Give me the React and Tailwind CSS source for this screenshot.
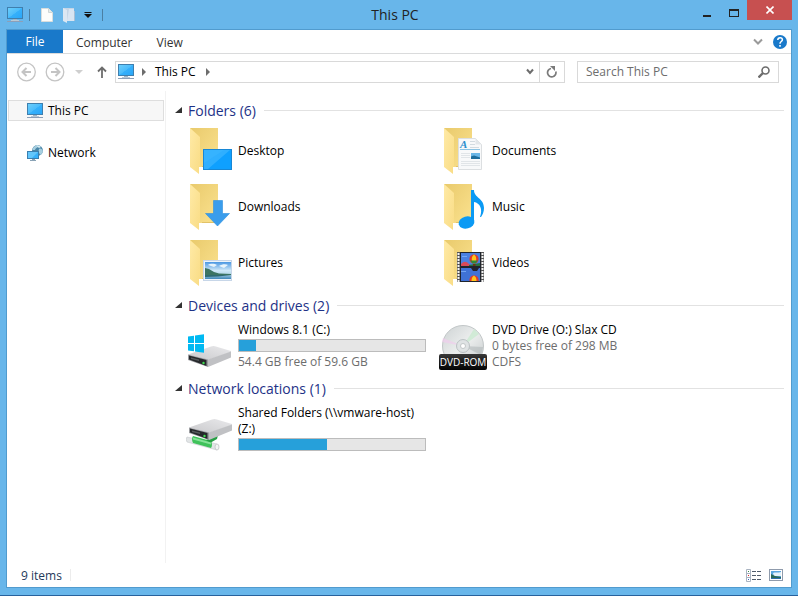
import { useState } from 'react'

const folders = [
  { name: 'Desktop', Badge: DesktopBadge },
  { name: 'Documents', Badge: DocumentBadge },
  { name: 'Downloads', Badge: DownloadBadge },
  { name: 'Music', Badge: MusicBadge },
  { name: 'Pictures', Badge: PictureBadge },
  { name: 'Videos', Badge: VideoBadge },
]

function Monitor() {
  return (
    <svg viewBox="0 0 16 16" className="w-4 h-4 shrink-0">
      <defs>
        <linearGradient id="screen" x1="0" y1="0" x2="1" y2="1">
          <stop offset="0" stopColor="#6fd0fb" />
          <stop offset=".5" stopColor="#4cbcfb" />
          <stop offset=".52" stopColor="#35b0fb" />
          <stop offset="1" stopColor="#2aa6f8" />
        </linearGradient>
      </defs>
      <rect x=".5" y=".5" width="15" height="11" fill="url(#screen)" stroke="#3f7fae" />
      <path d="M6 12h4v1H6z" fill="#9fb4c6" />
      <path d="M4 13h8v1H4z" fill="#b9c9d6" />
      <path d="M0 14.500h16" stroke="#8c9fb8" />
    </svg>
  )
}

function NetworkIcon() {
  return (
    <svg viewBox="0 0 16 16" className="w-4 h-4 shrink-0">
      <circle cx="10.500" cy="5.500" r="5.400" fill="#4a86a8" />
      <path d="M6 3c2-3 5-3 6-2-1 2-3 1-4 4H5.500zM12 4c2-1 3 0 4 2l-2 4c-2-1-3-3-2-6z" fill="#a6cfe0" />
      <path d="M9 .5c2-.5 4 .5 5 1.500l-2 1z" fill="#d6ecf3" />
      <rect x=".5" y="6.500" width="11" height="7" fill="#35b0fb" stroke="#3a7fb0" />
      <path d="M1 7h10L5 13H1z" fill="#62c6fc" />
      <path d="M5 14h3v1H5z" fill="#8aa3b6" />
      <path d="M3 15.500h6" stroke="#8aa3b6" />
    </svg>
  )
}

function Folder({ children }) {
  return (
    <svg viewBox="0 0 48 48" className="w-12 h-12 shrink-0">
      <defs>
        <linearGradient id="folderBack" x1="0" y1="0" x2="1" y2="1">
          <stop offset="0" stopColor="#e9ca6c" />
          <stop offset="1" stopColor="#fbe28f" />
        </linearGradient>
        <linearGradient id="folderFront" x1="0" y1="0" x2="1" y2="1">
          <stop offset="0" stopColor="#ffeaa6" />
          <stop offset="1" stopColor="#f9dc85" />
        </linearGradient>
      </defs>
      <path d="M4 1h28v39H13z" fill="url(#folderBack)" />
      <path d="M13 10v30h3v-1h16v1H13z" fill="#e2c268" />
      <path d="M4 1l10 9v29l-1 1v7L4 40z" fill="url(#folderFront)" />
      {children}
    </svg>
  )
}

function DesktopBadge() {
  return (
    <g>
      <rect x="17.500" y="22.500" width="28" height="20" fill="#0fa0ff" stroke="#1787d6" />
      <path d="M18 23h26L22 42h-4z" fill="#2fafff" />
      <path d="M18 23h20L18 36z" fill="#3cb5ff" opacity=".6" />
    </g>
  )
}

function DocumentBadge() {
  return (
    <g>
      <path d="M18.500 11.500h17l6 6v25h-23z" fill="#f8f9fa" stroke="#dcdfe1" />
      <path d="M35.500 11.500v6h6z" fill="#e3e7ea" />
      <text x="20" y="21" fontSize="11" fontStyle="italic" fontWeight="bold" fontFamily="Liberation Serif, serif" fill="#2c8fce">A</text>
      <path d="M30 14.500h5M30 17.500h5M30 20.500h9" stroke="#d3dbe0" />
      <path d="M20 22.500h20" stroke="#8cc4e4" />
      <path d="M21 26.500h9M21 28.500h9M21 30.500h9M21 34.500h19M21 36.500h19M21 38.500h19" stroke="#e1e5e8" />
      <rect x="31" y="26" width="9" height="6" fill="#6bb6e6" />
      <path d="M31 29.500l3-1 6 2v1.500h-9z" fill="#1d6c9b" />
    </g>
  )
}

function DownloadBadge() {
  return <path d="M27.500 17.500h9v13h7L31.500 43 19.500 30.500h8z" fill="#3a9dec" stroke="#2c8ede" strokeWidth=".6" />
}

function MusicBadge() {
  return (
    <g fill="#0b9af4">
      <path d="M31 7h3c0 8 10 8 10 18 0 4-1.500 7-3 9h-1c3-8 0-14-6-15v19h-3z" />
      <ellipse cx="26.500" cy="39.500" rx="8" ry="6" transform="rotate(-15 26.500 39.500)" />
    </g>
  )
}

function PictureBadge() {
  return (
    <g>
      <defs>
        <linearGradient id="sky" x1="0" y1="0" x2="0" y2="1">
          <stop offset="0" stopColor="#4a97e2" />
          <stop offset=".5" stopColor="#cfe8f8" />
          <stop offset=".68" stopColor="#b9dbea" />
          <stop offset="1" stopColor="#3f87b8" />
        </linearGradient>
      </defs>
      <rect x="17.500" y="21.500" width="28" height="20" fill="#eef4fa" stroke="#c7d6e8" />
      <rect x="19" y="23" width="26" height="17" fill="url(#sky)" />
      <path d="M22 26c3-2 7-1 9 0l-3 2zM33 27c3-2 7-2 9-1l-4 3z" fill="#e8f4fb" />
      <path d="M19 29l4 1 5 3 5 1.500 12 .5v1H19z" fill="#3c7462" />
      <path d="M19 36h26c-8 1-18 2-26 2z" fill="#2f6a70" />
    </g>
  )
}

function Balloon({ x, y }) {
  return (
    <g transform={`translate(${x} ${y})`}>
      <circle cx="5" cy="5" r="4.600" fill="#e03a2c" />
      <path d="M5 .4c-3 2-3 7 0 9 3-2 3-7 0-9z" fill="#ffc61a" />
      <path d="M1 6.500l2.500 3h3L9 6.500z" fill="#2c8a3a" />
      <path d="M4 10h2.500v2H4z" fill="#6b3013" />
    </g>
  )
}

function VideoBadge() {
  return (
    <g>
      <rect x="17" y="13" width="27" height="30" fill="#555" />
      <rect x="20" y="13" width="21" height="30" fill="#20242c" />
      <path d="M18.500 14v29M42.500 14v29" stroke="#f4f4f4" strokeWidth="2" strokeDasharray="2 1" />
      <rect x="21" y="14" width="19" height="13" fill="#4a80e0" />
      <rect x="21" y="29" width="19" height="13" fill="#3f72d6" />
      <path d="M21 25c3-3 5-3 8 0l3 2H21z" fill="#d94a58" />
      <path d="M29 26l11-2v3H29z" fill="#28713c" />
      <path d="M31 29l4-1 4 1-2 3h-4z" fill="#24232b" />
      <path d="M21 32h5v1h-5zM22 17h5v1h-5z" fill="#73a6f3" />
      <Balloon x="29" y="15" />
      <g transform="translate(29 36)">
        <path d="M.4 5a4.600 4.600 0 019.200 0v1H.4z" fill="#e03a2c" />
        <path d="M2.500 6c0-3 1-4.500 2.500-5.600C6.500 1.500 7.500 3 7.500 6z" fill="#ffc61a" />
      </g>
    </g>
  )
}

function DriveBody() {
  return (
    <g>
      <defs>
        <linearGradient id="driveTop" x1="0" y1="1" x2="1" y2="0">
          <stop offset="0" stopColor="#c9c9cc" />
          <stop offset="1" stopColor="#e9e9eb" />
        </linearGradient>
      </defs>
      <path d="M0 8.500L23 .5q2-.7 4-.2L43 5v1L20 14z" fill="url(#driveTop)" />
      <path d="M0 8.500l20 5v7.500L0 14z" fill="#9b9ca0" />
      <path d="M20 13.500L43 5.500v6L20 21z" fill="#c0c1c4" />
      <path d="M1 9.500l17.500 4.500v6L1 13.500z" fill="#26282b" />
      <path d="M3 11.500l8 2v1.500l-8-2z" fill="#55585b" />
      <circle cx="15.500" cy="17" r="1.200" fill="#3fdc4f" />
    </g>
  )
}

function LocalDrive() {
  return (
    <svg viewBox="0 0 48 48" className="w-12 h-12 shrink-0">
      <g transform="translate(2 24)"><DriveBody /></g>
      <path d="M2 14.500l6-.8V21H2zM9 13.500l9-1.200V21H9zM2 22h6v7.300l-6-.8zM9 22h9v8.700l-9-1.200z" fill="#00b9f2" />
    </svg>
  )
}

function NetworkDrive() {
  return (
    <svg viewBox="0 0 48 48" className="w-12 h-12 shrink-0">
      <path d="M1 32l30 7v6L1 37q-2-3 0-5z" fill="#e2e5e6" stroke="#c6cacc" strokeWidth=".6" />
      <path d="M7 31l18 5q2 4 0 7L7 38q-2-4 0-7z" fill="#3fc25a" />
      <path d="M20 35l12-5-1 4-7 4z" fill="#27a045" />
      <path d="M7 32.500l18 5v2l-18-5z" fill="#86e398" />
      <ellipse cx="31" cy="42" rx="2" ry="3" fill="#f4f5f5" stroke="#b9bdbf" strokeWidth=".7" />
      <g transform="translate(3 14)"><DriveBody /></g>
    </svg>
  )
}

function DvdDrive() {
  return (
    <svg viewBox="0 0 48 48" className="w-12 h-12 shrink-0 overflow-visible">
      <defs>
        <linearGradient id="disc" x1="0" y1="0" x2="1" y2="1">
          <stop offset="0" stopColor="#cdd2d3" />
          <stop offset=".5" stopColor="#eceeee" />
          <stop offset="1" stopColor="#c3c8c9" />
        </linearGradient>
        <linearGradient id="plate" x1="0" y1="0" x2="0" y2="1">
          <stop offset="0" stopColor="#3a3a3a" />
          <stop offset=".5" stopColor="#1a1a1a" />
          <stop offset="1" stopColor="#050505" />
        </linearGradient>
      </defs>
      <circle cx="23" cy="24" r="20.500" fill="url(#disc)" stroke="#c2c7c8" />
      <path d="M23 24L34 7l5 5z" fill="#bfe9c8" opacity=".6" />
      <path d="M23 24L3 16l-1 4z" fill="#efcdec" opacity=".7" />
      <path d="M23 24l20 1-2 8z" fill="#b3b9bb" opacity=".6" />
      <circle cx="23" cy="24" r="6.500" fill="#dfe3e4" stroke="#bcc2c4" />
      <circle cx="23" cy="24" r="2.500" fill="#fff" stroke="#c2c7c8" />
      <rect x="-1" y="32" width="48" height="16" rx="2" fill="url(#plate)" />
      <text x="23" y="44" textAnchor="middle" fontSize="10" fontFamily="Open Sans, sans-serif" fill="#fff">DVD-ROM</text>
    </svg>
  )
}

function Bar({ value }) {
  return (
    <div className="h-4 pt-px">
      <div className="h-[13px] border border-[#bcbcbc] bg-[#e6e6e6]">
        <div className="h-full bg-[#26a0da]" style={{ width: `${value}%` }} />
      </div>
    </div>
  )
}

function Group({ title, count, children }) {
  const [open, setOpen] = useState(true)
  return (
    <section>
      <h2 className="flex items-center h-[25px] text-[14px] leading-[23px] text-[#1e3287]">
        <button className="flex items-center gap-1.5 whitespace-nowrap" aria-expanded={open} onClick={() => setOpen(!open)}>
          <svg viewBox="0 0 7 7" className="w-[7px] h-[7px]"><path d="M7 0v6H0z" fill="#333" /></svg>
          {title} ({count})
        </button>
        <span className="flex-1 h-px ml-2 bg-[#e2e2e2]" />
      </h2>
      {open && <div className="grid grid-cols-[repeat(auto-fill,254px)] auto-rows-[56px] pl-[11px]">{children}</div>}
    </section>
  )
}

function Tile({ icon, children }) {
  return (
    <button className="flex items-center gap-1 text-left">
      {icon}
      <span className="block w-[188px] leading-4">{children}</span>
    </button>
  )
}

function TitleBar() {
  return (
    <header className="grid grid-cols-[1fr_auto_1fr] h-[29px] shrink-0">
      <div className="flex items-center pl-px text-[#1f1f1f]">
        <Monitor />
        <span className="w-px h-3 ml-1.5 bg-[#4b7fa3]" />
        <button aria-label="Properties" className="ml-2.5">
          <svg viewBox="0 0 14 14" className="w-3.5 h-3.5">
            <path d="M1.500.5h7l4 4v9h-11z" fill="#fdfdfb" stroke="#d9dedd" />
            <path d="M8.500.5v4h4" fill="#e6eae9" stroke="#cfd6d6" />
          </svg>
        </button>
        <button aria-label="New folder" className="ml-2">
          <svg viewBox="0 0 14 16" className="w-3.5 h-4">
            <path d="M1 1h11v13H1z" fill="#c5d5e6" />
            <path d="M7 2h5v12H5z" fill="#d9e5f2" />
            <path d="M1 1l4 2v13l-4-2z" fill="#dce7f2" />
            <path d="M12.500 4v10" stroke="#a9bfd5" />
          </svg>
        </button>
        <button aria-label="Customize Quick Access Toolbar" className="ml-2">
          <svg viewBox="0 0 8 8" className="w-2 h-2"><path d="M.5 1.500h7" stroke="#111" /><path d="M0 3h8L4 7z" fill="#111" /></svg>
        </button>
        <span className="w-px h-3 ml-2.5 bg-[#4b7fa3]" />
      </div>
      <h1 className="pr-2 text-[14px] leading-[29px] text-[#222]">This PC</h1>
      <div className="flex items-start justify-end">
        <button aria-label="Minimize" className="w-[27px] h-5 pt-3"><span className="block w-2 h-0.5 mx-auto bg-[#222]" /></button>
        <button aria-label="Maximize" className="w-[27px] h-5 pt-1.5"><span className="block w-2.5 h-2 mx-auto border border-t-2 border-[#222]" /></button>
        <button aria-label="Close" className="flex items-center justify-center w-[45px] h-5 bg-[#c75050]">
          <svg viewBox="0 0 8 8" className="w-2 h-2"><path d="M.5.5l7 7m0-7l-7 7" stroke="#fff" strokeWidth="1.600" /></svg>
        </button>
      </div>
    </header>
  )
}

function Ribbon() {
  return (
    <div className="flex items-center h-6 border-b border-[#dadbdc] text-[#333]">
      <button className="w-14 h-full bg-[#1979ca] text-white">File</button>
      <button className="ml-[13px] pt-0.5">Computer</button>
      <button className="ml-6 pt-0.5">View</button>
      <button aria-label="Expand the Ribbon" className="ml-auto">
        <svg viewBox="0 0 10 8" className="w-2.5 h-2"><path d="M1 1.500l4 4 4-4" fill="none" stroke="#9a9a9a" strokeWidth="2" /></svg>
      </button>
      <button aria-label="Help" className="ml-2.5 mr-1">
        <svg viewBox="0 0 14 14" className="w-3.5 h-3.5">
          <circle cx="7" cy="7" r="7" fill="#1979ca" />
          <path d="M4.800 5c0-3 4.600-3 4.600-.3C9.400 6.500 7 6.600 7 8.700" fill="none" stroke="#fff" strokeWidth="1.500" />
          <path d="M6.200 10h1.600v1.700H6.200z" fill="#fff" />
        </svg>
      </button>
    </div>
  )
}

function AddressRow() {
  return (
    <div className="flex items-center pl-2.5 pr-3 pt-[7px] pb-2">
      <button aria-label="Back">
        <svg viewBox="0 0 20 20" className="w-5 h-5" fill="none" stroke="#c4c4c4">
          <circle cx="9.500" cy="10" r="8.800" strokeWidth="1.300" />
          <path d="M14 10H6M9.500 6l-4 4 4 4" strokeWidth="2" />
        </svg>
      </button>
      <button aria-label="Forward" className="ml-2">
        <svg viewBox="0 0 20 20" className="w-5 h-5" fill="none" stroke="#c4c4c4">
          <circle cx="10" cy="10" r="8.800" strokeWidth="1.300" />
          <path d="M6 10h8M10.500 6l4 4-4 4" strokeWidth="2" />
        </svg>
      </button>
      <button aria-label="Recent locations" className="flex justify-center w-4 ml-1.5">
        <svg viewBox="0 0 8 4" className="w-2 h-1"><path d="M0 0h8L4 4z" fill="#cfcfcf" /></svg>
      </button>
      <button aria-label="Up" className="flex justify-center w-5 ml-[5px]">
        <svg viewBox="0 0 10 12" className="w-2.5 h-3" fill="none" stroke="#6d6d6d" strokeWidth="1.800"><path d="M5 12V1.500M1 5.500l4-4 4 4" /></svg>
      </button>
      <div className="flex items-center flex-1 h-[22px] ml-[3px] pl-0.5 border border-[#d9d9d9]">
        <Monitor />
        <svg viewBox="0 0 4 8" className="w-1 h-2 ml-2"><path d="M0 0l4 4-4 4z" fill="#6d6d6d" /></svg>
        <button className="ml-[9px]">This PC</button>
        <svg viewBox="0 0 4 8" className="w-1 h-2 ml-2.5"><path d="M0 0l4 4-4 4z" fill="#6d6d6d" /></svg>
        <button aria-label="Previous locations" className="ml-auto mr-1">
          <svg viewBox="0 0 10 8" className="w-2.5 h-2"><path d="M2 1.500l3 3.500 3-3.500" fill="none" stroke="#6d6d6d" strokeWidth="2" /></svg>
        </button>
        <button aria-label="Refresh" className="flex items-center justify-center w-[25px] h-full border-l border-[#d9d9d9]">
          <svg viewBox="0 0 12 12" className="w-3 h-3">
            <path d="M5 2.500A4.200 4.200 0 109.800 5.500" fill="none" stroke="#7a7a7a" strokeWidth="1.700" />
            <path d="M4 0h5v5z" fill="#7a7a7a" />
          </svg>
        </button>
      </div>
      <label className="flex items-center w-[202px] h-[22px] ml-3 pl-2 pr-2 border border-[#d9d9d9]">
        <input className="flex-1 min-w-0 outline-none placeholder:text-[#6d6d6d]" placeholder="Search This PC" aria-label="Search This PC" />
        <svg viewBox="0 0 12 12" className="w-3 h-3" fill="none" stroke="#6d6d6d">
          <circle cx="7.500" cy="4.500" r="3.500" strokeWidth="1.600" />
          <path d="M5 7l-4.500 4.500" strokeWidth="2.400" />
        </svg>
      </label>
    </div>
  )
}

function StatusBar() {
  return (
    <footer className="flex items-center h-6 pl-3.5 pr-2 text-[#1e395b]">
      <span className="pt-0.5">9 items</span>
      <span className="w-px h-3 ml-2 bg-[#ececec]" />
      <button aria-label="Details view" className="ml-auto">
        <svg viewBox="0 0 16 13" className="w-4 h-[13px]">
          <path d="M.5.500h4v4h-4zM.5 4.500h4v4h-4zM.5 8.500h4v4h-4z" fill="#fff" stroke="#a9b3c1" />
          <path d="M6 2.500h4M11 2.500h4M6 6.500h4M11 6.500h4M6 10.500h4M11 10.500h4" stroke="#4f5b6b" />
          <path d="M2 2h1v1H2z" fill="#3b8a4a" /><path d="M2 6h1v1H2z" fill="#e02020" /><path d="M2 10h1v1H2z" fill="#3565c0" />
        </svg>
      </button>
      <button aria-label="Large icons view" className="ml-[7px]">
        <svg viewBox="0 0 14 12" className="w-3.5 h-3">
          <rect x=".5" y=".5" width="13" height="11" fill="#fff" stroke="#8f9bac" />
          <path d="M2 2h10v8H2z" fill="#5aa7e0" />
          <path d="M4 4c2-1 5 0 8-1v4H5z" fill="#e4f2fa" />
          <path d="M2 5l4 2 6 1v1H2z" fill="#2a6a58" />
          <path d="M2 9h10v1H2z" fill="#2f6fae" />
        </svg>
      </button>
    </footer>
  )
}

export default function App() {
  return (
    <div className="flex flex-col min-h-screen px-1.5 bg-[#68b6ea] border-b border-[#27619c] font-['Open_Sans',sans-serif] text-xs text-black">
      <TitleBar />
      <div className="flex flex-col flex-1 mb-[7px] border border-[#519bce] bg-white">
        <Ribbon />
        <AddressRow />
        <div className="flex flex-1">
          <nav className="flex flex-col gap-[21px] w-[159px] px-px pt-[9px] border-r border-[#f2f2f2] shrink-0">
            <a href="#this-pc" className="flex items-center gap-[5px] h-[21px] pl-[18px] border border-[#dedede] bg-[#f7f7f7]"><Monitor />This PC</a>
            <a href="#network" className="flex items-center gap-[5px] h-[21px] pl-[18px] border border-transparent"><NetworkIcon />Network</a>
          </nav>
          <main className="flex flex-col flex-1 gap-0.5 pl-[9px] pr-[7px] pt-[7px]">
            <Group title="Folders" count={6}>
              {folders.map(({ name, Badge }) => (
                <Tile key={name} icon={<Folder><Badge /></Folder>}>{name}</Tile>
              ))}
            </Group>
            <Group title="Devices and drives" count={2}>
              <Tile icon={<LocalDrive />}>
                Windows 8.1 (C:)
                <Bar value={9} />
                <span className="block text-[#6d6d6d]">54.4 GB free of 59.6 GB</span>
              </Tile>
              <Tile icon={<DvdDrive />}>
                DVD Drive (O:) Slax CD
                <span className="block text-[#6d6d6d]">0 bytes free of 298 MB</span>
                <span className="block text-[#6d6d6d]">CDFS</span>
              </Tile>
            </Group>
            <Group title="Network locations" count={1}>
              <Tile icon={<NetworkDrive />}>
                Shared Folders (\\vmware-host) (Z:)
                <Bar value={47.5} />
              </Tile>
            </Group>
          </main>
        </div>
        <StatusBar />
      </div>
    </div>
  )
}
